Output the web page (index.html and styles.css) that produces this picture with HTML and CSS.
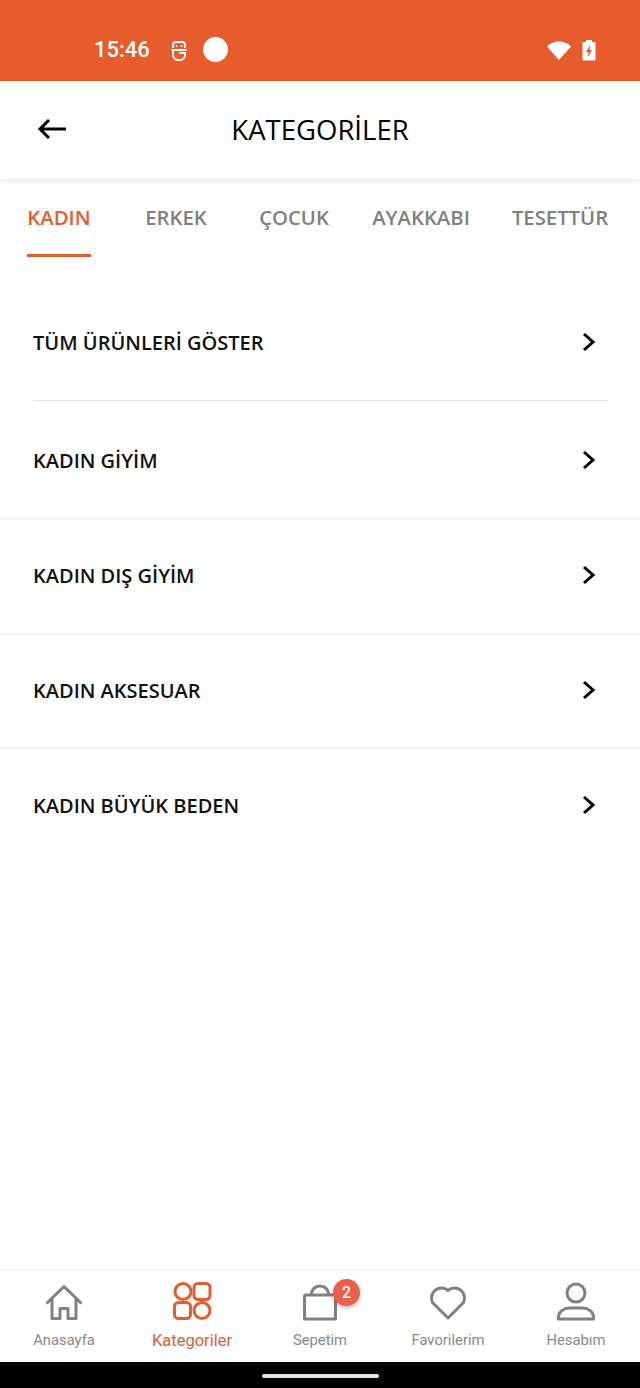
FILE: index.html
```html
<!DOCTYPE html>
<html lang="tr">
<head>
    <meta charset="UTF-8">
    <meta name="viewport" content="width=device-width, initial-scale=1.0">
    <title>Kategoriler</title>
    <link rel="stylesheet" href="styles.css">
</head>
<body>
    <div class="screen">
        <div class="status-bar">
            <span class="clock">15:46</span>
            <svg class="status-app" width="18" height="22" viewBox="0 0 18 22" fill="none" stroke="#fff" stroke-width="2">
                <path d="M3 9V6a3 3 0 0 1 3-3h6a3 3 0 0 1 3 3v3M1.500 11h15M3 11v5a5 5 0 0 0 5 5h2a5 5 0 0 0 5-5v-2H9"/>
                <circle cx="6.500" cy="7" r="1" fill="#fff" stroke="none"/>
                <circle cx="11.500" cy="7" r="1" fill="#fff" stroke="none"/>
            </svg>
            <span class="status-dot"></span>
            <span class="status-right">
                <svg width="26" height="20" viewBox="0 0 26 20"><path d="M1 6.500C4.500 3.200 8.500 1.500 13 1.500s8.500 1.700 12 5L13 20z" fill="#fff"/></svg>
                <svg width="14" height="22" viewBox="0 0 14 22">
                    <path d="M4 1h6v2h2.500a1 1 0 0 1 1 1v16.500a1 1 0 0 1-1 1h-11a1 1 0 0 1-1-1V4a1 1 0 0 1 1-1H4z" fill="#fff"/>
                    <path d="M8 6l-4 7h2.500L6 18l4-7H7.500z" fill="#e65c2d"/>
                </svg>
            </span>
        </div>

        <header class="top-bar">
            <svg class="back" width="32" height="24" viewBox="0 0 32 24" fill="none" stroke="#000" stroke-width="3">
                <path d="M30 12H4M13 3l-9 9 9 9"/>
            </svg>
            <h1>KATEGORİLER</h1>
        </header>

        <nav class="tabs">
            <div class="tab active"><span>KADIN</span></div>
            <div class="tab"><span>ERKEK</span></div>
            <div class="tab"><span>ÇOCUK</span></div>
            <div class="tab"><span>AYAKKABI</span></div>
            <div class="tab"><span>TESETTÜR</span></div>
        </nav>

        <main class="list">
            <div class="row first">
                <span>TÜM ÜRÜNLERİ GÖSTER</span>
                <svg class="chev" width="14" height="20" viewBox="0 0 14 20" fill="none" stroke="#000" stroke-width="3"><path d="M2 2l9 8-9 8"/></svg>
            </div>
            <div class="row second">
                <span>KADIN GİYİM</span>
                <svg class="chev" width="14" height="20" viewBox="0 0 14 20" fill="none" stroke="#000" stroke-width="3"><path d="M2 2l9 8-9 8"/></svg>
            </div>
            <div class="row">
                <span>KADIN DIŞ GİYİM</span>
                <svg class="chev" width="14" height="20" viewBox="0 0 14 20" fill="none" stroke="#000" stroke-width="3"><path d="M2 2l9 8-9 8"/></svg>
            </div>
            <div class="row">
                <span>KADIN AKSESUAR</span>
                <svg class="chev" width="14" height="20" viewBox="0 0 14 20" fill="none" stroke="#000" stroke-width="3"><path d="M2 2l9 8-9 8"/></svg>
            </div>
            <div class="row last">
                <span>KADIN BÜYÜK BEDEN</span>
                <svg class="chev" width="14" height="20" viewBox="0 0 14 20" fill="none" stroke="#000" stroke-width="3"><path d="M2 2l9 8-9 8"/></svg>
            </div>
        </main>

        <footer class="bottom-nav">
            <div class="nav-item">
                <svg width="40" height="40" viewBox="0 0 40 40" fill="none" stroke="#808080" stroke-width="3" stroke-linejoin="round">
                    <path d="M2.500 21.500L20 4.500l17.500 17M8 17v19.500h8V26.500h8v10h8V17"/>
                </svg>
                <span>Anasayfa</span>
            </div>
            <div class="nav-item active">
                <svg width="40" height="40" viewBox="0 0 40 40" fill="none" stroke="#e65c2d" stroke-width="3">
                    <circle cx="11" cy="9.500" r="8"/>
                    <rect x="22" y="1.500" width="16" height="16" rx="4"/>
                    <rect x="2.500" y="20.500" width="16" height="16" rx="4"/>
                    <circle cx="30" cy="28.500" r="8"/>
                </svg>
                <span>Kategoriler</span>
            </div>
            <div class="nav-item">
                <svg width="40" height="40" viewBox="0 0 40 40" fill="none" stroke="#808080" stroke-width="3" stroke-linejoin="round">
                    <path d="M6 13h28a1.500 1.500 0 0 1 1.500 1.500V37h-31V14.500A1.500 1.500 0 0 1 6 13zM11 13C12 7 15 4 20 4s8 3 9 9"/>
                </svg>
                <span>Sepetim</span>
                <b class="badge">2</b>
            </div>
            <div class="nav-item">
                <svg width="40" height="40" viewBox="0 0 40 40" fill="none" stroke="#808080" stroke-width="3" stroke-linejoin="round">
                    <path d="M20 36L4.500 20.500A10 10 0 0 1 20 8.500a10 10 0 0 1 15.500 12z"/>
                </svg>
                <span>Favorilerim</span>
            </div>
            <div class="nav-item">
                <svg width="40" height="40" viewBox="0 0 40 40" fill="none" stroke="#808080" stroke-width="3" stroke-linejoin="round">
                    <circle cx="20" cy="11" r="9"/>
                    <path d="M2.500 37v-2c0-5 5-9 11-9h13c6 0 11 4 11 9v2z"/>
                </svg>
                <span>Hesabım</span>
            </div>
        </footer>

        <div class="system-nav"><span class="pill"></span></div>
    </div>
</body>
</html>
```

FILE: styles.css
```css
* {
    box-sizing: border-box;
}
html, body {
    margin: 0;
    padding: 0;
    background-color: #fff;
}
.screen {
    width: 640px;
    height: 1388px;
    display: flex;
    flex-direction: column;
    overflow: hidden;
    font-family: "Open Sans", "Noto Sans", sans-serif;
}
.status-bar {
    height: 81px;
    flex: none;
    display: flex;
    align-items: center;
    padding: 18px 44px 0 94px;
    background-color: #e65c2d;
    color: #fff;
}
.clock {
    font-family: Roboto, sans-serif;
    font-size: 22px;
    font-weight: 500;
}
.status-app {
    margin-left: 20px;
}
.status-dot {
    width: 25px;
    height: 25px;
    margin-left: 15px;
    border-radius: 50%;
    background-color: #fff;
}
.status-right {
    margin-left: auto;
    display: flex;
    align-items: center;
    gap: 10px;
}
.top-bar {
    height: 98px;
    flex: none;
    position: relative;
    z-index: 1;
    display: flex;
    align-items: center;
    justify-content: center;
    background-color: #fff;
    box-shadow: 0 3px 8px rgba(0,0,0,0.08);
}
.back {
    position: absolute;
    left: 36px;
    top: 36px;
}
.top-bar h1 {
    margin: 0 0 2px;
    font-size: 27.500px;
    font-weight: 500;
    color: #000;
}
.tabs {
    height: 78px;
    flex: none;
    display: grid;
    grid-template-columns: 118px 116px 120px 134px 144px;
    text-align: center;
    font-size: 20.300px;
    font-weight: 600;
    color: #808080;
}
.tab span {
    display: inline-block;
    height: 78px;
    padding-top: 24px;
}
.tab.active {
    color: #e65c2d;
}
.tab.active span {
    border-bottom: 3px solid #e65c2d;
}
.list {
    flex: 1;
    padding-top: 29px;
}
.row {
    height: 114.500px;
    display: flex;
    align-items: center;
    justify-content: space-between;
    padding: 0 44px 0 33px;
    border-bottom: 2px solid #f4f4f4;
    font-size: 20px;
    font-weight: 600;
    color: #111;
}
.row span {
    margin-bottom: 1px;
}
.chev {
    margin-bottom: 2px;
}
.row.first {
    height: 115px;
    margin: 0 32px 0 33px;
    padding: 0 12px 0 0;
    border-bottom: 1px solid #e4e4e4;
}
.row.second {
    height: 119px;
    padding-top: 2px;
}
.row.last {
    border-bottom: none;
}
.bottom-nav {
    height: 93px;
    flex: none;
    display: grid;
    grid-template-columns: repeat(5, 128px);
    border-top: 2px solid #f6f6f6;
    background-color: #fff;
}
.nav-item {
    position: relative;
    display: flex;
    flex-direction: column;
    align-items: center;
    padding-top: 11px;
    font-family: Roboto, sans-serif;
    font-size: 14.800px;
    color: #8a8a8a;
}
.nav-item svg {
    margin-bottom: 9px;
}
.nav-item.active {
    color: #e65c2d;
    font-size: 16.500px;
}
.badge {
    position: absolute;
    top: 8px;
    left: 77px;
    width: 27px;
    height: 27px;
    border-radius: 50%;
    background-color: #e8604a;
    box-shadow: 0 2px 4px rgba(0,0,0,0.25);
    color: #fff;
    font-size: 16px;
    font-weight: 500;
    line-height: 27px;
    text-align: center;
}
.system-nav {
    height: 26px;
    flex: none;
    display: flex;
    justify-content: center;
    padding-top: 12px;
    background-color: #000;
}
.pill {
    width: 117px;
    height: 4px;
    border-radius: 2px;
    background-color: #e8e8e8;
}
```
